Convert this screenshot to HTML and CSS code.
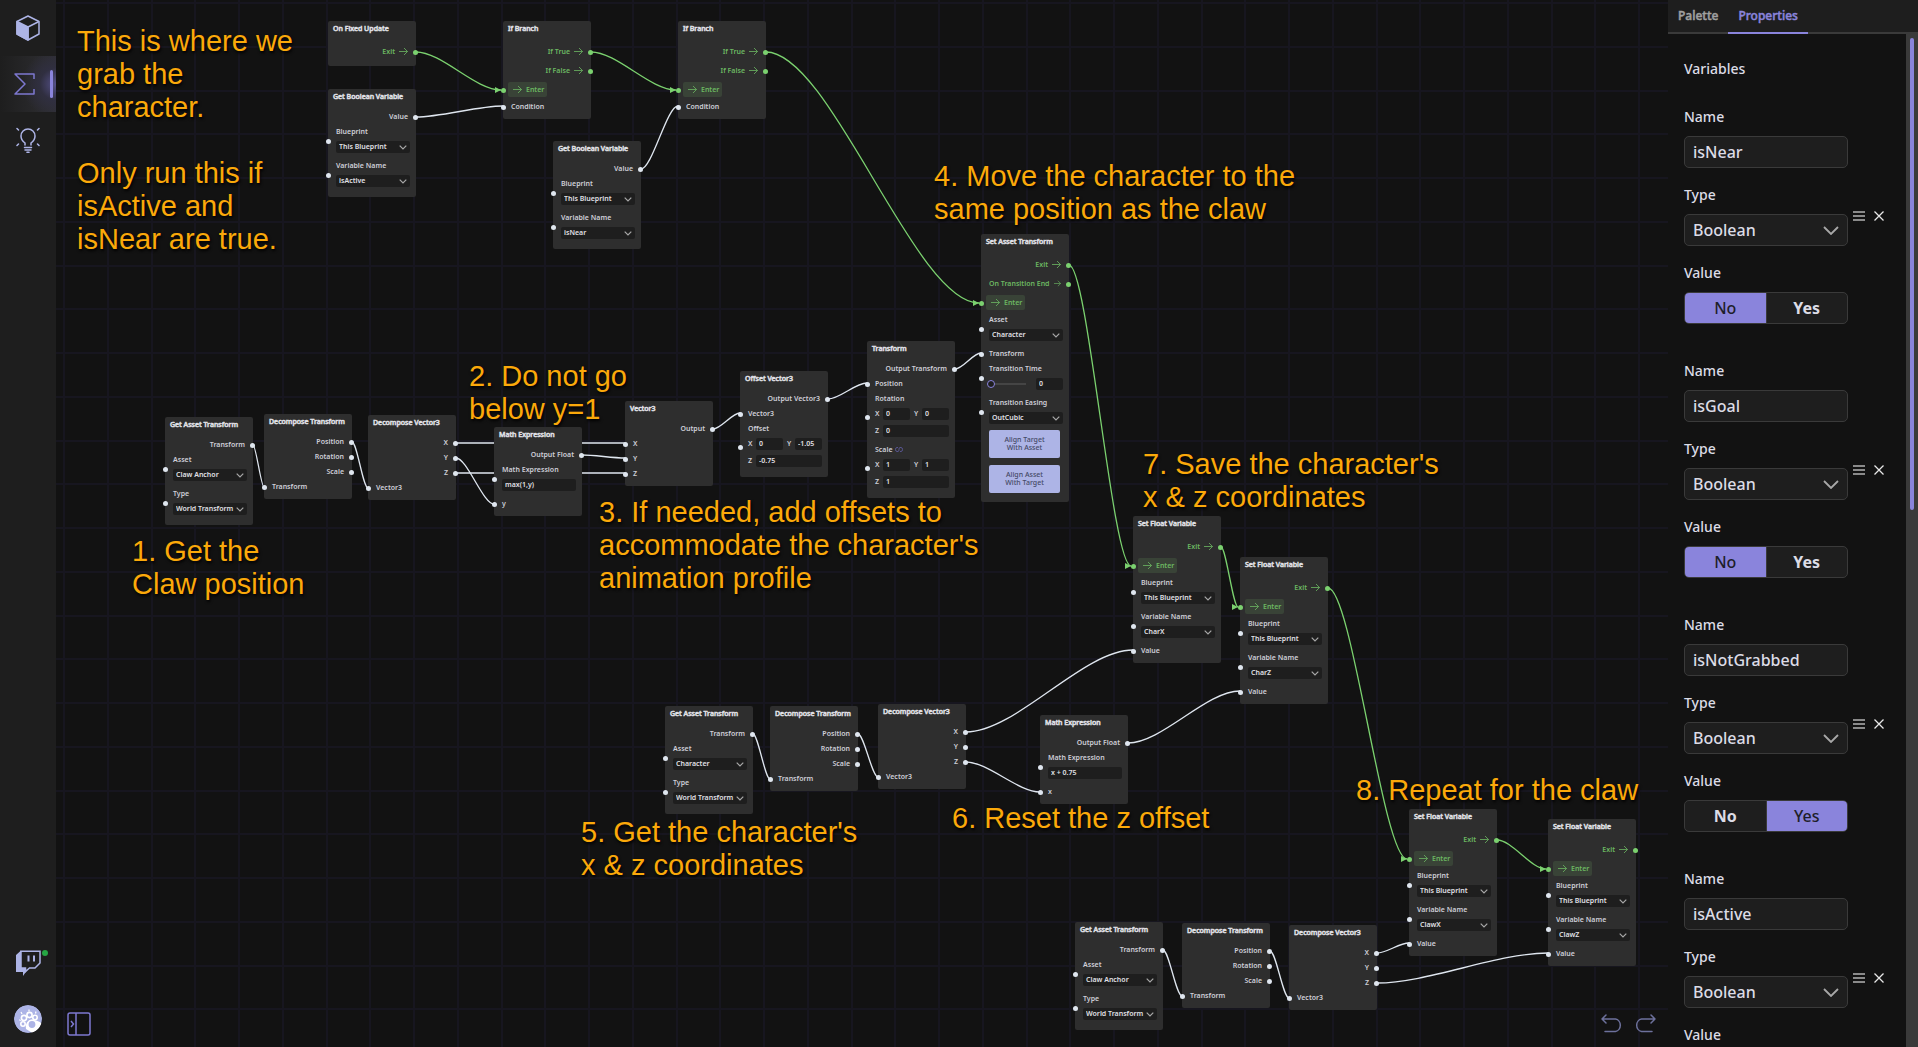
FILE: index.html
```html
<!DOCTYPE html>
<html lang="en">
<head>
<meta charset="utf-8">
<title>Blueprint Editor</title>
<link rel="stylesheet" href="styles.css">
</head>
<body>
<div class="app">

<nav class="rail" aria-label="Main">
  <a class="rail-item" href="#assets" aria-label="Assets">
    <svg width="24" height="26" viewBox="0 0 24 26" fill="none" stroke="#adb4e6" stroke-width="1.5" stroke-linejoin="round"><path d="M12 1 23 6.500V19L12 25 1 19V6.500Z"/><path d="M12 12 23 6.500M12 12V25"/><path d="M1 6.500 12 12V25L1 19Z" fill="#adb4e6"/></svg>
  </a>
  <a class="rail-item active" href="#logic" aria-label="Logic">
    <svg width="22" height="22" viewBox="0 0 22 22" fill="none" stroke="#7d78d0" stroke-width="1.5" stroke-linejoin="round"><path d="M20 6V1H1L11 11 1 21H20V16"/></svg>
  </a>
  <a class="rail-item" href="#tips" aria-label="Tips">
    <svg width="24" height="26" viewBox="0 0 24 26" fill="none" stroke="#adb4e6" stroke-width="1.500" stroke-linecap="round"><path d="M9 18V16C6 14 5 12 5 9a7 7 0 0 1 14 0c0 3-1 5-4 7v2"/><path d="M8.500 20.500h7M9 23h6M11 25.300h2M1 1.500l1.500 1.500M23 1.500 21.500 3M1 18.500 2.500 17M23 18.500 21.500 17"/></svg>
  </a>
  <span class="rail-space"></span>
  <a class="rail-item" href="#stream" aria-label="Twitch">
    <svg width="26" height="27" viewBox="0 0 26 27"><path d="M1 5 6 .5V17h5.500v4L8 26V22H1Z" fill="#adb4e6"/><path d="M6 1.200H25V13L20 18H14.500L10.500 21.500V18H6Z" fill="#1e1e1e" stroke="#adb4e6" stroke-width="1.500"/><path d="M13.500 5.500v6M19 5.500v6" stroke="#adb4e6" stroke-width="2"/></svg>
    <span class="status"></span>
  </a>
  <a class="rail-item" href="#account" aria-label="Account">
    <svg width="28" height="28" viewBox="0 0 28 28"><defs><clipPath id="disc"><circle cx="14" cy="14" r="14"/></clipPath></defs><g clip-path="url(#disc)"><circle cx="14" cy="14" r="14" fill="#adb4e6"/><path d="M12 24c-1-5 2-10 7-9 3 0 6 1 9 4l-2 6-6 4Z" fill="#fff"/><g fill="#adb4e6" stroke="#fff" stroke-width="1.600"><circle cx="9" cy="19" r="2.200"/><circle cx="10" cy="13" r="2.600"/><circle cx="15.500" cy="10" r="2.600"/><circle cx="21" cy="12.500" r="2.200"/><circle cx="18" cy="19.500" r="4.200"/></g><path d="M6.500 16 5.500 14.500M8 9 7 7M15 6.500V4.500M21.500 8.500l.5-2" stroke="#fff" stroke-width="1.200"/></g></svg>
  </a>
</nav>

<main class="canvas">
  <svg class="wires" aria-hidden="true">
    <defs>
      <pattern id="grid" x="7" y="2" width="175" height="175" patternUnits="userSpaceOnUse">
        <path d="M0 1H175M0 45H175M0 89H175M0 132H175M1 0V175M45 0V175M89 0V175M132 0V175" stroke="#17161f" stroke-width="2"/>
      </pattern>
      <marker id="tip" viewBox="0 0 6 6" refX="6" refY="3" markerWidth="6" markerHeight="6" markerUnits="userSpaceOnUse"><path d="M0 0 6 3 0 6Z" fill="#7bd16f"/></marker>
    </defs>
    <rect width="100%" height="100%" fill="url(#grid)"/>
    <g class="exec-wires" transform="translate(-56 0)">
      <path d="M416 52C442 52 475 90 501 90"/>
      <path d="M591 52C617 52 650 90 676 90"/>
      <path d="M766 52C830 52 915 303 979 303"/>
      <path d="M1069 265C1088 265 1112 566 1131 566"/>
      <path d="M1221 547C1226 547 1233 607 1238 607"/>
      <path d="M1328 588C1352 588 1383 859 1407 859"/>
      <path d="M1497 840C1512 840 1531 869 1546 869"/>
    </g>
    <g class="data-wires" transform="translate(-56 0)">
      <path d="M416 117C442 117 477 106 503 106"/>
      <path d="M641 169C652 169 667 106 678 106"/>
      <path d="M253 445C256 445 261 487 264 487"/>
      <path d="M352 442C357 442 363 488 368 488"/>
      <path d="M456 443H625M456 473H625"/>
      <path d="M456 458C467 458 483 504 494 504"/>
      <path d="M582 455C595 455 612 458 625 458"/>
      <path d="M713 429C721 429 732 413 740 413"/>
      <path d="M828 399C840 399 855 383 867 383"/>
      <path d="M955 369C963 369 973 353 981 353"/>
      <path d="M753 734C758 734 765 779 770 779"/>
      <path d="M858 734C864 734 872 777 878 777"/>
      <path d="M966 732C1016 732 1083 650 1133 650"/>
      <path d="M966 762C988 762 1018 792 1040 792"/>
      <path d="M1128 743C1162 743 1206 691 1240 691"/>
      <path d="M1163 950C1169 950 1176 996 1182 996"/>
      <path d="M1270 951C1276 951 1283 998 1289 998"/>
      <path d="M1377 953C1387 953 1399 943 1409 943"/>
      <path d="M1377 983C1428 983 1497 953 1548 953"/>
    </g>
  </svg>

  <section class="node" style="left:272px;top:21px">
    <h3>On Fixed Update</h3>
    <p class="exec out">Exit</p>
  </section>

  <section class="node" style="left:272px;top:89px">
    <h3>Get Boolean Variable</h3>
    <p class="row out">Value</p>
    <label class="field">Blueprint<select><option>This Blueprint</option></select></label>
    <label class="field">Variable Name<select><option>isActive</option></select></label>
  </section>

  <section class="node" style="left:447px;top:21px">
    <h3>If Branch</h3>
    <p class="exec out">If True</p>
    <p class="exec out">If False</p>
    <p class="exec in"><span>Enter</span></p>
    <p class="row in">Condition</p>
  </section>

  <section class="node" style="left:622px;top:21px">
    <h3>If Branch</h3>
    <p class="exec out">If True</p>
    <p class="exec out">If False</p>
    <p class="exec in"><span>Enter</span></p>
    <p class="row in">Condition</p>
  </section>

  <section class="node" style="left:497px;top:141px">
    <h3>Get Boolean Variable</h3>
    <p class="row out">Value</p>
    <label class="field">Blueprint<select><option>This Blueprint</option></select></label>
    <label class="field">Variable Name<select><option>isNear</option></select></label>
  </section>

  <section class="node" style="left:109px;top:417px">
    <h3>Get Asset Transform</h3>
    <p class="row out">Transform</p>
    <label class="field">Asset<select><option>Claw Anchor</option></select></label>
    <label class="field">Type<select><option>World Transform</option></select></label>
  </section>

  <section class="node" style="left:208px;top:414px">
    <h3>Decompose Transform</h3>
    <p class="row out">Position</p>
    <p class="row out">Rotation</p>
    <p class="row out">Scale</p>
    <p class="row in">Transform</p>
  </section>

  <section class="node" style="left:312px;top:415px">
    <h3>Decompose Vector3</h3>
    <p class="row out">X</p>
    <p class="row out">Y</p>
    <p class="row out">Z</p>
    <p class="row in">Vector3</p>
  </section>

  <section class="node" style="left:438px;top:427px">
    <h3>Math Expression</h3>
    <p class="row out">Output Float</p>
    <label class="field">Math Expression<input type="text" value="max(1,y)"></label>
    <p class="row in">y</p>
  </section>

  <section class="node" style="left:569px;top:401px">
    <h3>Vector3</h3>
    <p class="row out">Output</p>
    <p class="row in">X</p>
    <p class="row in">Y</p>
    <p class="row in">Z</p>
  </section>

  <section class="node" style="left:684px;top:371px">
    <h3>Offset Vector3</h3>
    <p class="row out">Output Vector3</p>
    <p class="row in">Vector3</p>
    <div class="vector">
      <p>Offset</p>
      <label>X<input type="text" value="0"></label>
      <label>Y<input type="text" value="-1.05"></label>
      <label class="wide">Z<input type="text" value="-0.75"></label>
    </div>
  </section>

  <section class="node" style="left:811px;top:341px">
    <h3>Transform</h3>
    <p class="row out">Output Transform</p>
    <p class="row in">Position</p>
    <div class="vector">
      <p>Rotation</p>
      <label>X<input type="text" value="0"></label>
      <label>Y<input type="text" value="0"></label>
      <label class="wide">Z<input type="text" value="0"></label>
    </div>
    <div class="vector">
      <p>Scale <svg width="8" height="5" viewBox="0 0 8 5" fill="none" stroke="#625ea6" stroke-width=".8"><path d="M3 .5H2a1.500 2 0 0 0 0 4H3C5 4.500 3 .5 5 .5H6a1.500 2 0 0 1 0 4H5"/></svg></p>
      <label>X<input type="text" value="1"></label>
      <label>Y<input type="text" value="1"></label>
      <label class="wide">Z<input type="text" value="1"></label>
    </div>
  </section>

  <section class="node" style="left:925px;top:234px">
    <h3>Set Asset Transform</h3>
    <p class="exec out">Exit</p>
    <p class="exec out">On Transition End</p>
    <p class="exec in"><span>Enter</span></p>
    <label class="field">Asset<select><option>Character</option></select></label>
    <p class="row in">Transform</p>
    <div class="field">
      <label for="transition-time">Transition Time</label>
      <div class="slider">
        <input type="range" min="0" max="10" value="0" aria-label="Transition Time">
        <input type="text" id="transition-time" value="0">
      </div>
    </div>
    <label class="field">Transition Easing<select><option>OutCubic</option></select></label>
    <div class="actions">
      <button type="button">Align Target<br>With Asset</button>
      <button type="button">Align Asset<br>With Target</button>
    </div>
  </section>

  <section class="node" style="left:1077px;top:516px">
    <h3>Set Float Variable</h3>
    <p class="exec out">Exit</p>
    <p class="exec in"><span>Enter</span></p>
    <label class="field">Blueprint<select><option>This Blueprint</option></select></label>
    <label class="field">Variable Name<select><option>CharX</option></select></label>
    <p class="row in">Value</p>
  </section>

  <section class="node" style="left:1184px;top:557px">
    <h3>Set Float Variable</h3>
    <p class="exec out">Exit</p>
    <p class="exec in"><span>Enter</span></p>
    <label class="field">Blueprint<select><option>This Blueprint</option></select></label>
    <label class="field">Variable Name<select><option>CharZ</option></select></label>
    <p class="row in">Value</p>
  </section>

  <section class="node" style="left:609px;top:706px">
    <h3>Get Asset Transform</h3>
    <p class="row out">Transform</p>
    <label class="field">Asset<select><option>Character</option></select></label>
    <label class="field">Type<select><option>World Transform</option></select></label>
  </section>

  <section class="node" style="left:714px;top:706px">
    <h3>Decompose Transform</h3>
    <p class="row out">Position</p>
    <p class="row out">Rotation</p>
    <p class="row out">Scale</p>
    <p class="row in">Transform</p>
  </section>

  <section class="node" style="left:822px;top:704px">
    <h3>Decompose Vector3</h3>
    <p class="row out">X</p>
    <p class="row out">Y</p>
    <p class="row out">Z</p>
    <p class="row in">Vector3</p>
  </section>

  <section class="node" style="left:984px;top:715px">
    <h3>Math Expression</h3>
    <p class="row out">Output Float</p>
    <label class="field">Math Expression<input type="text" value="x + 0.75"></label>
    <p class="row in">x</p>
  </section>

  <section class="node" style="left:1353px;top:809px">
    <h3>Set Float Variable</h3>
    <p class="exec out">Exit</p>
    <p class="exec in"><span>Enter</span></p>
    <label class="field">Blueprint<select><option>This Blueprint</option></select></label>
    <label class="field">Variable Name<select><option>ClawX</option></select></label>
    <p class="row in">Value</p>
  </section>

  <section class="node" style="left:1492px;top:819px">
    <h3>Set Float Variable</h3>
    <p class="exec out">Exit</p>
    <p class="exec in"><span>Enter</span></p>
    <label class="field">Blueprint<select><option>This Blueprint</option></select></label>
    <label class="field">Variable Name<select><option>ClawZ</option></select></label>
    <p class="row in">Value</p>
  </section>

  <section class="node" style="left:1019px;top:922px">
    <h3>Get Asset Transform</h3>
    <p class="row out">Transform</p>
    <label class="field">Asset<select><option>Claw Anchor</option></select></label>
    <label class="field">Type<select><option>World Transform</option></select></label>
  </section>

  <section class="node" style="left:1126px;top:923px">
    <h3>Decompose Transform</h3>
    <p class="row out">Position</p>
    <p class="row out">Rotation</p>
    <p class="row out">Scale</p>
    <p class="row in">Transform</p>
  </section>

  <section class="node" style="left:1233px;top:925px">
    <h3>Decompose Vector3</h3>
    <p class="row out">X</p>
    <p class="row out">Y</p>
    <p class="row out">Z</p>
    <p class="row in">Vector3</p>
  </section>

  <p class="note" style="left:21px;top:25px">This is where we<br>grab the<br>character.<br><br>Only run this if<br>isActive and<br>isNear are true.</p>
  <p class="note" style="left:76px;top:535px">1. Get the<br>Claw position</p>
  <p class="note" style="left:413px;top:360px">2. Do not go<br>below y=1</p>
  <p class="note" style="left:543px;top:496px">3. If needed, add offsets to<br>accommodate the character's<br>animation profile</p>
  <p class="note" style="left:878px;top:160px">4. Move the character to the<br>same position as the claw</p>
  <p class="note" style="left:525px;top:816px">5. Get the character's<br>x &amp; z coordinates</p>
  <p class="note" style="left:896px;top:802px">6. Reset the z offset</p>
  <p class="note" style="left:1087px;top:448px">7. Save the character's<br>x &amp; z coordinates</p>
  <p class="note" style="left:1300px;top:774px">8. Repeat for the claw</p>

  <div class="canvas-bar">
    <button type="button" aria-label="Toggle side panel">
      <svg width="24" height="24" viewBox="0 0 24 24" fill="none" stroke="#7d78d0" stroke-width="1.500"><rect x="1" y="1" width="22" height="22" rx="2"/><path d="M9 1V23M4 9l2.500 3L4 15"/></svg>
    </button>
    <div class="history">
      <button type="button" aria-label="Undo">
        <svg width="21" height="19" viewBox="0 0 21 19" fill="none" stroke="#6d719c" stroke-width="1.500" stroke-linecap="round" stroke-linejoin="round"><path d="M5 1 1 5l4 4M1 5H14.500a5.500 6.300 0 0 1 0 12.500H4"/></svg>
      </button>
      <button type="button" aria-label="Redo">
        <svg width="21" height="19" viewBox="0 0 21 19" fill="none" stroke="#6d719c" stroke-width="1.500" stroke-linecap="round" stroke-linejoin="round"><path d="M16 1l4 4-4 4M20 5H6.500a5.500 6.300 0 0 0 0 12.500H17"/></svg>
      </button>
    </div>
  </div>
</main>

<aside class="panel">
  <div class="tabs" role="tablist">
    <button type="button" role="tab" aria-selected="false">Palette</button>
    <button type="button" role="tab" aria-selected="true">Properties</button>
  </div>
  <div class="panel-body">
    <div class="variables">
      <h2>Variables</h2>

      <div class="variable">
        <div class="controls">
          <label>Name<input type="text" value="isNear"></label>
          <label>Type<select><option>Boolean</option></select></label>
          <div class="group" role="radiogroup" aria-labelledby="v1">
            <span id="v1">Value</span>
            <div class="toggle"><label><input type="radio" name="isNear" checked>No</label><label><input type="radio" name="isNear">Yes</label></div>
          </div>
        </div>
        <button type="button" class="drag" aria-label="Reorder"></button>
        <button type="button" class="remove" aria-label="Remove"></button>
      </div>

      <div class="variable">
        <div class="controls">
          <label>Name<input type="text" value="isGoal"></label>
          <label>Type<select><option>Boolean</option></select></label>
          <div class="group" role="radiogroup" aria-labelledby="v2">
            <span id="v2">Value</span>
            <div class="toggle"><label><input type="radio" name="isGoal" checked>No</label><label><input type="radio" name="isGoal">Yes</label></div>
          </div>
        </div>
        <button type="button" class="drag" aria-label="Reorder"></button>
        <button type="button" class="remove" aria-label="Remove"></button>
      </div>

      <div class="variable">
        <div class="controls">
          <label>Name<input type="text" value="isNotGrabbed"></label>
          <label>Type<select><option>Boolean</option></select></label>
          <div class="group" role="radiogroup" aria-labelledby="v3">
            <span id="v3">Value</span>
            <div class="toggle"><label><input type="radio" name="isNotGrabbed">No</label><label><input type="radio" name="isNotGrabbed" checked>Yes</label></div>
          </div>
        </div>
        <button type="button" class="drag" aria-label="Reorder"></button>
        <button type="button" class="remove" aria-label="Remove"></button>
      </div>

      <div class="variable">
        <div class="controls">
          <label>Name<input type="text" value="isActive"></label>
          <label>Type<select><option>Boolean</option></select></label>
          <div class="group" role="radiogroup" aria-labelledby="v4">
            <span id="v4">Value</span>
            <div class="toggle"><label><input type="radio" name="isActive" aria-label="No" checked></label><label><input type="radio" name="isActive" aria-label="Yes"></label></div>
          </div>
        </div>
        <button type="button" class="drag" aria-label="Reorder"></button>
        <button type="button" class="remove" aria-label="Remove"></button>
      </div>
    </div>
    <div class="scrollbar"><span></span></div>
  </div>
</aside>

</div>
</body>
</html>
```
FILE: styles.css
```css
* { box-sizing: border-box; }

:root {
  --ink: #121212;
  --surface: #1e1e1e;
  --node: #2e2e2e;
  --line: #3a3a3a;
  --text: #dcdce6;
  --violet: #8a84dc;
  --lavender: #adb4e6;
  --green: #7bd16f;
}

body {
  margin: 0;
  background: var(--ink);
  color: var(--text);
  font-family: "Noto Sans", "Open Sans", sans-serif;
}

p, h2, h3 { margin: 0; }
button, input, select { margin: 0; font: inherit; color: inherit; }
button { padding: 0; border: 0; background: none; cursor: pointer; }
svg { display: block; }

.app { display: flex; height: 100vh; overflow: hidden; }

/* left rail */
.rail {
  flex: 0 0 56px;
  display: flex;
  flex-direction: column;
  background: var(--surface);
}
.rail-item {
  position: relative;
  display: flex;
  align-items: center;
  justify-content: center;
  height: 56px;
}
.rail-item.active {
  padding-right: 6px;
  background: radial-gradient(circle at 100% 50%, #55518a 0, #302f40 16px, transparent 34px), linear-gradient(90deg, #1e1e1e, #2f2f33);
}
.rail-item.active::after {
  content: "";
  position: absolute;
  top: 14px;
  right: 3px;
  width: 3px;
  height: 28px;
  border-radius: 2px;
  background: var(--violet);
}
.rail-space { flex: 1; }
.status {
  position: absolute;
  top: 15px;
  right: 8px;
  width: 6px;
  height: 6px;
  border-radius: 50%;
  background: #26a644;
}

/* node canvas */
.canvas {
  position: relative;
  flex: 1;
  display: flex;
  flex-direction: column;
  justify-content: flex-end;
  min-width: 0;
  overflow: hidden;
}
.wires { position: absolute; inset: 0; width: 100%; height: 100%; }
.exec-wires path, .data-wires path { fill: none; stroke-width: 1.3; }
.exec-wires path { stroke: var(--green); marker-end: url(#tip); }
.data-wires path { stroke: #dfe6ef; }

.node {
  position: absolute;
  width: 88px;
  padding-bottom: 5px;
  border-radius: 2px;
  background: var(--node);
  color: #cfcfd8;
  font-size: 7px;
  font-weight: 600;
  line-height: 15px;
  white-space: nowrap;
}
.node h3 {
  height: 20px;
  padding-left: 5px;
  color: #e0e0e6;
  font-size: 7px;
  font-weight: 500;
  line-height: 15px;
  -webkit-text-stroke: .5px currentColor;
}
.row, .exec, .field, .vector { position: relative; padding: 0 6px 0 8px; }
.out { padding-right: 8px; text-align: right; }
.row.out::after, .exec.out::before, .row.in::before, .exec.in::before, .field::before, .vector::before {
  content: "";
  position: absolute;
  top: 50%;
  left: -2px;
  width: 5px;
  height: 5px;
  margin-top: -2px;
  border-radius: 50%;
  background: #dfe6ef;
}
.row.out::after, .exec.out::before { left: auto; right: -2px; }
.exec.out::before, .exec.in::before { background: var(--green); }

.exec { height: 19px; color: #6cb862; line-height: 19px; }
h3 + .exec { margin-top: 1px; }
.exec.out { display: flex; align-items: center; justify-content: flex-end; gap: 4px; }
.exec.out::after, .exec.in span::before {
  content: "";
  width: 9px;
  height: 9px;
  background: url("data:image/svg+xml,%3Csvg xmlns='http://www.w3.org/2000/svg' viewBox='0 0 9 9' fill='none' stroke='%236cb862' stroke-width='.8'%3E%3Cpath d='M0 4.500H8.500M5 1 8.500 4.500 5 8'/%3E%3C/svg%3E") center / contain no-repeat;
}
.exec.in { display: flex; align-items: center; padding-left: 5px; }
.exec.in span {
  display: flex;
  align-items: center;
  gap: 4px;
  height: 15px;
  padding: 0 3px 0 5px;
  border-radius: 2px;
  background: #394337;
}

.field { display: flex; flex-direction: column; gap: 2px; height: 34px; }
.field select, .field input[type="text"], .vector input {
  width: 100%;
  height: 12px;
  padding: 0 3px;
  border: 0;
  border-radius: 2px;
  background: var(--surface);
  color: #e0e0e6;
  font-size: 7px;
  line-height: 12px;
}
.field label { display: block; }
select { appearance: none; }
.field select {
  background: var(--surface) url("data:image/svg+xml,%3Csvg xmlns='http://www.w3.org/2000/svg' viewBox='0 0 8 5' fill='none' stroke='%23a8a8a8' stroke-width='1.200'%3E%3Cpath d='M.7.7 4 4 7.300.7'/%3E%3C/svg%3E") right 3px center / 8px 5px no-repeat;
}
.slider { display: flex; align-items: center; justify-content: space-between; }
.field .slider input[type="text"] { width: 27px; }
.slider input[type="range"] {
  appearance: none;
  width: 39px;
  height: 8px;
  margin-left: -2px;
  background: linear-gradient(#454545, #454545) center / 100% 2px no-repeat;
}
.slider input[type="range"]::-webkit-slider-thumb {
  appearance: none;
  width: 8px;
  height: 8px;
  border: 1px solid var(--violet);
  border-radius: 50%;
  background: var(--surface);
}

.vector {
  display: grid;
  grid-template-columns: 35px 35px;
  column-gap: 4px;
  row-gap: 5px;
  padding-bottom: 5px;
}
.vector p { grid-column: 1 / -1; display: flex; align-items: center; gap: 2px; margin-bottom: -3px; }
.vector label { display: grid; grid-template-columns: 8px 1fr; height: 12px; line-height: 12px; }
.vector .wide { grid-column: 1 / -1; }

.actions { display: flex; flex-direction: column; gap: 7px; padding: 1px 9px 4px 8px; }
.actions button {
  height: 28px;
  border-radius: 2px;
  background: var(--lavender);
  color: #454a66;
  font-size: 7px;
  font-weight: 500;
  line-height: 8px;
}

.note {
  position: absolute;
  color: #fba90a;
  font-family: "Liberation Sans", Arial, sans-serif;
  font-size: 29px;
  line-height: 33px;
  white-space: nowrap;
  text-shadow: 1px 2px 3px #000;
}

.canvas-bar {
  position: relative;
  display: flex;
  align-items: flex-end;
  justify-content: space-between;
  padding: 0 12px 11px 11px;
}
.history { display: flex; gap: 13px; padding-bottom: 3px; }

/* properties panel */
.panel { flex: 0 0 250px; display: flex; flex-direction: column; background: var(--ink); }
.tabs {
  flex: none;
  display: flex;
  height: 34px;
  background: var(--surface);
  box-shadow: inset 0 -2px var(--line);
}
.tabs button {
  padding: 0 10px 1px;
  border-bottom: 2px solid transparent;
  color: #a0a0a0;
  font-size: 12px;
  font-weight: 500;
  -webkit-text-stroke: .5px currentColor;
}
.tabs button[aria-selected="true"] { border-color: var(--violet); color: var(--violet); }

.panel-body { flex: 1; display: flex; min-height: 0; overflow: hidden; }
.variables {
  flex: 1;
  display: flex;
  flex-direction: column;
  gap: 37px;
  padding: 25px 16px;
  font-size: 14px;
  font-weight: 500;
  line-height: 20px;
}
.variables h2 { margin-bottom: -9px; font-size: 14px; font-weight: 500; line-height: 20px; }
.variable { display: flex; align-items: center; }
.controls { flex: 0 0 164px; display: flex; flex-direction: column; gap: 17px; }
.controls > label, .group { display: flex; flex-direction: column; gap: 9px; }
.controls input[type="text"], .controls select {
  width: 100%;
  height: 32px;
  padding: 0 8px;
  border: 1px solid var(--line);
  border-radius: 5px;
  background: var(--surface);
  font-size: 16px;
  font-weight: 500;
}
.controls select {
  background: var(--surface) url("data:image/svg+xml,%3Csvg xmlns='http://www.w3.org/2000/svg' viewBox='0 0 16 9' fill='none' stroke='%23a8a8a8' stroke-width='1.800'%3E%3Cpath d='M1 1 8 8 15 1'/%3E%3C/svg%3E") right 8px center / 16px 9px no-repeat;
}
.toggle {
  display: flex;
  height: 32px;
  border: 1px solid var(--line);
  border-radius: 5px;
  background: var(--surface);
  overflow: hidden;
}
.toggle label {
  position: relative;
  flex: 1;
  font-size: 16px;
  font-weight: 700;
  line-height: 30px;
  text-align: center;
}
.toggle label + label { border-left: 1px solid var(--line); }
.toggle label:has(:checked) { background: var(--violet); color: #1e1e2a; font-weight: 500; }
.toggle input { position: absolute; inset: 0; margin: 0; opacity: 0; }
.drag {
  width: 12px;
  height: 10px;
  margin-left: 5px;
  background: linear-gradient(#8a8a8a 2px, transparent 2px 4px, #8a8a8a 4px 6px, transparent 6px 8px, #8a8a8a 8px);
}
.remove {
  width: 10px;
  height: 10px;
  margin-left: 9px;
  background: url("data:image/svg+xml,%3Csvg xmlns='http://www.w3.org/2000/svg' viewBox='0 0 10 10' stroke='%23e8e8e8' stroke-width='1.300'%3E%3Cpath d='M.5.5 9.500 9.500M9.500.5.5 9.500'/%3E%3C/svg%3E") center / contain no-repeat;
}
.scrollbar { flex: 0 0 12px; padding: 4px; background: var(--line); }
.scrollbar span { display: block; height: 47%; border-radius: 2px; background: var(--violet); }
```
